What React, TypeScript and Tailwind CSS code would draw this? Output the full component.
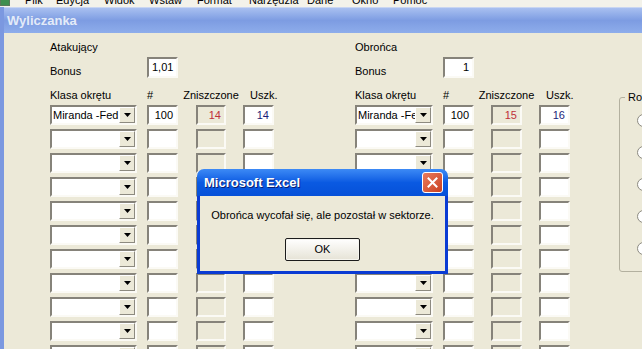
import React from "react";

const sunken =
  "border-2 border-t-[#86837a] border-l-[#86837a] border-b-[#fbfaf5] border-r-[#fbfaf5]";

type Cols = { combo: string; gaps: [string, string, string]; zn: string };

const menuItems: [string, string][] = [
  ["Plik", "w-[31px]"],
  ["Edycja", "w-[48px]"],
  ["Widok", "w-[45px]"],
  ["Wstaw", "w-[48px]"],
  ["Format", "w-[52px]"],
  ["Narzędzia", "w-[58px]"],
  ["Dane", "w-[45px]"],
  ["Okno", "w-[41px]"],
  ["Pomoc", "w-[50px]"],
];

const Arrow = () => (
  <svg width="7" height="4" viewBox="0 0 7 4">
    <path d="M0 0h7L3.5 4z" fill="#000" />
  </svg>
);

const Combo = ({ w, text }: { w: string; text?: string }) => (
  <div className={`flex h-[20px] ${w} ${sunken} bg-white`}>
    <div className="flex-1 overflow-hidden whitespace-nowrap pl-[1px] leading-[16px]">{text}</div>
    <div className="flex w-[16px] shrink-0 items-center justify-center border border-t-white border-l-white border-b-[#8d8a80] border-r-[#8d8a80] bg-[#ece9d8]">
      <Arrow />
    </div>
  </div>
);

const Box = ({
  w,
  value,
  color = "text-black",
  disabled,
  align = "text-right",
}: {
  w: string;
  value?: string;
  color?: string;
  disabled?: boolean;
  align?: string;
}) => (
  <div
    className={`h-[20px] ${w} ${sunken} ${disabled ? "bg-[#ece9d8]" : "bg-white"} ${align} ${color} px-[3px] leading-[16px]`}
  >
    {value}
  </div>
);

const Side = ({
  title,
  bonus,
  bonusAlign,
  cols,
  first,
}: {
  title: string;
  bonus: string;
  bonusAlign: string;
  cols: Cols;
  first: { ship: string; count: string; zn: string; uszk: string };
}) => (
  <div className="flex shrink-0 flex-col">
    <div className="h-[13px] leading-[13px]">{title}</div>
    <div className="mt-[3px] flex items-end">
      <div className={`${cols.combo} h-[13px] leading-[13px]`}>Bonus</div>
      <div className={cols.gaps[0]} />
      <div className={`h-[21px] w-[31px] ${sunken} bg-white px-[3px] leading-[17px] ${bonusAlign}`}>{bonus}</div>
    </div>
    <div className="mt-[11px] flex h-[13px] leading-[13px]">
      <div className={cols.combo}>Klasa okrętu</div>
      <div className={cols.gaps[0]} />
      <div className="w-[31px]">#</div>
      <div className={cols.gaps[1]} />
      <div className={`${cols.zn} flex justify-center whitespace-nowrap`}>Zniszczone</div>
      <div className={cols.gaps[2]} />
      <div className="w-[31px] pl-[7px]">Uszk.</div>
    </div>
    <div className="mt-[3px] flex flex-col gap-[4px]">
      {Array.from({ length: 11 }).map((_, i) => (
        <div key={i} className="flex">
          <Combo w={cols.combo} text={i === 0 ? first.ship : undefined} />
          <div className={cols.gaps[0]} />
          <Box w="w-[31px]" value={i === 0 ? first.count : undefined} />
          <div className={cols.gaps[1]} />
          <Box w={cols.zn} disabled value={i === 0 ? first.zn : undefined} color="text-[#c0303a]" />
          <div className={cols.gaps[2]} />
          <Box w="w-[31px]" value={i === 0 ? first.uszk : undefined} color="text-[#1c1c7a]" />
        </div>
      ))}
    </div>
  </div>
);

export default function App() {
  return (
    <div className="relative h-[349px] w-[642px] overflow-hidden bg-[#ece9d8] font-['Liberation_Sans',Arial,sans-serif] text-[11px] text-black">
      {/* menu bar, only its bottom edge shows */}
      <div className="flex h-[7px] overflow-hidden bg-[#f3f2ea] text-[11px]">
        <div className="-mt-[3px] mr-[15px] h-[9px] w-[10px] shrink-0 border border-[#5a7a5a] bg-[#3f8f4f]" />
        <div className="-mt-[6px] flex">
          {menuItems.map(([t, w]) => (
            <span key={t} className={`${w} shrink-0 whitespace-nowrap leading-[13px]`}>
              {t}
            </span>
          ))}
        </div>
      </div>

      {/* window */}
      <div className="flex h-[342px] flex-col overflow-hidden border-l-4 border-[#7b98e0]">
        <div className="-ml-[4px] flex h-[26px] shrink-0 items-center border-t border-[#c9d6f2] bg-gradient-to-b from-[#a9c0f0] via-[#7d9ce2] to-[#8eadeb] pl-[7px] text-[13px] font-bold text-[#e4ebf8]">
          Wyliczanka
        </div>
        <div className="flex min-h-0 shrink-0 pl-[46px] pt-[8px]">
          <Side
            title="Atakujący"
            bonus="1,01"
            bonusAlign="text-left"
            cols={{ combo: "w-[87px]", gaps: ["w-[10px]", "w-[18px]", "w-[17px]"], zn: "w-[30px]" }}
            first={{ ship: "Miranda -Fed", count: "100", zn: "14", uszk: "14" }}
          />
          <div className="w-[81px] shrink-0" />
          <Side
            title="Obrońca"
            bonus="1"
            bonusAlign="text-right"
            cols={{ combo: "w-[78px]", gaps: ["w-[10px]", "w-[17px]", "w-[17px]"], zn: "w-[31px]" }}
            first={{ ship: "Miranda -Fe", count: "100", zn: "15", uszk: "16" }}
          />
          <div className="w-[49px] shrink-0" />
          {/* group box */}
          <div className="relative mt-[56px] h-[175px] w-[120px] shrink-0 rounded-[3px] border border-[#b3b09f]">
            <div className="absolute -top-[7px] left-[5px] bg-[#ece9d8] px-[3px] leading-[13px]">Rodzaj</div>
            <div className="flex flex-col gap-[19px] pl-[17px] pt-[16px]">
              {Array.from({ length: 5 }).map((_, i) => (
                <div key={i} className="h-[13px] w-[13px] rounded-full border border-[#8c8a80] bg-white" />
              ))}
            </div>
          </div>
        </div>
      </div>

      {/* message box */}
      <div className="absolute left-[197px] top-[169px] flex h-[105px] w-[251px] flex-col">
        <div className="flex h-[27px] items-center justify-between rounded-t-[7px] bg-gradient-to-b from-[#3d8af5] via-[#0a5ae2] to-[#0650d8] pl-[7px] pr-[5px] text-[13px] font-bold text-white [text-shadow:1px_1px_#0a1e70]">
          <span>Microsoft Excel</span>
          <div className="flex h-[21px] w-[21px] items-center justify-center rounded-[3px] border border-white bg-gradient-to-br from-[#e97a5c] to-[#c93f1e]">
            <svg width="11" height="11" viewBox="0 0 11 11">
              <path d="M1.5 1.5l8 8M9.5 1.5l-8 8" stroke="#fff" strokeWidth="2" strokeLinecap="square" />
            </svg>
          </div>
        </div>
        <div className="flex flex-1 flex-col items-center border-x-[3px] border-b-[3px] border-[#0a3bd3] bg-[#ece9d8]">
          <div className="mt-[13px] whitespace-nowrap leading-[13px]">Obrońca wycofał się, ale pozostał w sektorze.</div>
          <div className="mt-[16px] flex h-[23px] w-[75px] items-center justify-center rounded-[2px] border border-[#1c1c1c] bg-gradient-to-b from-white to-[#e6e3d6] shadow-[inset_0_0_0_1px_#f6f5ef]">
            OK
          </div>
        </div>
      </div>
    </div>
  );
}
